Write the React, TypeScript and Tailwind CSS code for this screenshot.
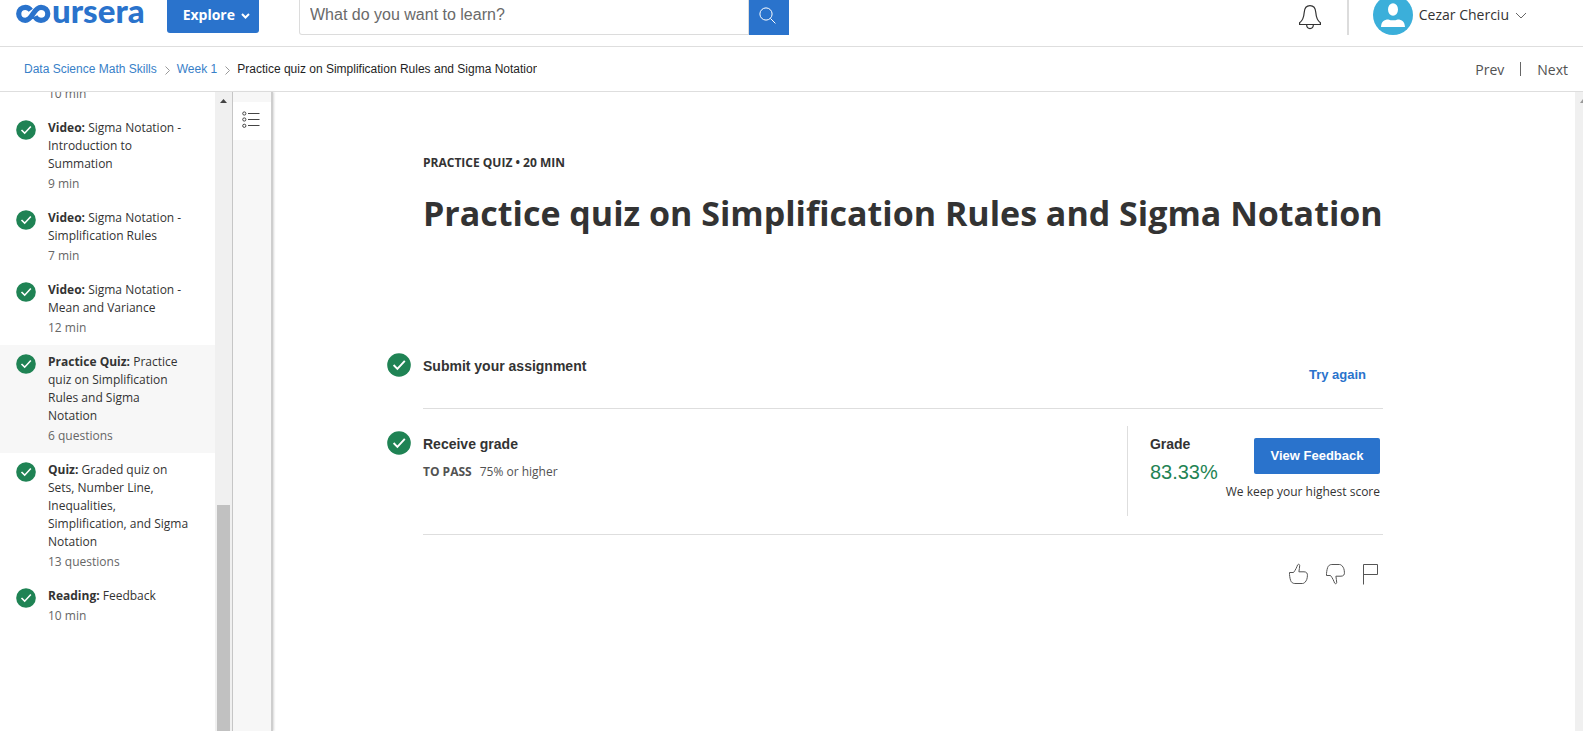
import React from "react";

const ARIAL = "font-['Liberation_Sans',Arial,sans-serif]";

type Item = { kind: string; title: string; meta: string; active?: boolean };

const items: Item[] = [
  { kind: "Video:", title: "Sigma Notation - Introduction to Summation", meta: "9 min" },
  { kind: "Video:", title: "Sigma Notation - Simplification Rules", meta: "7 min" },
  { kind: "Video:", title: "Sigma Notation - Mean and Variance", meta: "12 min" },
  {
    kind: "Practice Quiz:",
    title: "Practice quiz on Simplification Rules and Sigma Notation",
    meta: "6 questions",
    active: true,
  },
  {
    kind: "Quiz:",
    title: "Graded quiz on Sets, Number Line, Inequalities, Simplification, and Sigma Notation",
    meta: "13 questions",
  },
  { kind: "Reading:", title: "Feedback", meta: "10 min" },
];

function Check({ className }: { className: string }) {
  return (
    <svg viewBox="0 0 24 24" className={className} aria-hidden="true">
      <circle cx="12" cy="12" r="11.8" fill="#1f8354" />
      <path d="M6.6 12l3.8 3.8 7.4-8" fill="none" stroke="#fff" strokeWidth="1.9" />
    </svg>
  );
}

function Logo() {
  return (
    <svg width="130" height="32" viewBox="0 0 130 32" role="img" aria-label="coursera" className="block">
      <path
        d="M14.800 10.200C13.400 8.300 11.500 7.300 9.300 7.300C5.600 7.300 2.700 10.200 2.700 13.800C2.700 17.400 5.600 20.300 9.300 20.300C16.600 20.300 17.400 7.300 25 7.300C28.900 7.300 31.800 10.200 31.800 13.800C31.800 17.400 28.900 20.300 25 20.300C22 20.300 20 18.700 19 16.400"
        fill="none"
        stroke="#2a73cc"
        strokeWidth="5.200"
      />
      <text x="36" y="23" fontSize="33" className="font-[Lato,sans-serif] font-black" fill="#2a73cc">
        ursera
      </text>
    </svg>
  );
}

function Header() {
  return (
    <header className="flex h-[47px] items-start border-b border-[#dedede]">
      <a href="#home" className="ml-4 w-[151px] shrink-0">
        <Logo />
      </a>
      <button className="flex h-[33px] w-[92px] shrink-0 items-center justify-end gap-[6px] rounded-b-[3px] bg-[#2a73cc] pr-[9px] pb-1 text-[14px] font-bold text-white">
        Explore
        <svg width="9" height="6" viewBox="0 0 9 6" className="mt-[2px]" aria-hidden="true">
          <path d="M1 1l3.500 3.500L8 1" fill="none" stroke="#fff" strokeWidth="2" />
        </svg>
      </button>
      <form className="ml-10 flex h-[35px] w-[490px]" onSubmit={(e) => e.preventDefault()}>
        <input
          aria-label="Search"
          placeholder="What do you want to learn?"
          className={`min-w-0 flex-1 rounded-bl-[3px] border border-t-0 border-[#dcdcdc] px-[10px] pb-1 text-[16px] text-[#333] outline-none placeholder:text-[#6a6a6a] ${ARIAL}`}
        />
        <button aria-label="Submit search" className="flex w-10 items-center justify-center bg-[#2a73cc] pr-1 pb-[5px]">
          <svg width="17" height="17" viewBox="0 0 17 17" fill="none" stroke="#fff" aria-hidden="true">
            <circle cx="7" cy="7" r="6.100" />
            <path d="M11.400 11.400l5 5" />
          </svg>
        </button>
      </form>
      <div className="ml-auto flex h-[35px] items-start pr-14">
        <button aria-label="Notifications" className="mr-[25px] pt-1">
          <svg width="24" height="26" viewBox="0 0 24 26" fill="none" stroke="#333" strokeWidth="1.200" aria-hidden="true">
            <path d="M1.600 20.500v-1.800C5 16.500 5.800 13.500 6.200 8.500C6.500 4 8.500 1.600 12 1.600s5.500 2.400 5.800 6.900c.4 5 1.200 8 4.600 10.200v1.800z" />
            <path d="M8.600 20.800c.2 2.600 1.500 3.800 3.400 3.800s3.200-1.200 3.400-3.800" />
          </svg>
        </button>
        <span className="mr-6 h-full w-[2px] bg-[#dcdcdc]" />
        <button className="flex h-full items-start text-[14px] text-[#333]">
          <svg width="40" height="35" viewBox="0 5 40 35" className="mr-[6px]" aria-hidden="true">
            <circle cx="20" cy="20" r="20" fill="#3bafda" />
            <ellipse cx="20" cy="14.500" rx="5" ry="6.200" fill="#fff" />
            <path d="M8 32c.3-5.500 3-7.600 7.400-7.600c2.600 1.200 6.600 1.200 9.200 0c4.400 0 7.100 2.100 7.400 7.600z" fill="#fff" />
          </svg>
          <span className="pt-1 leading-[22px]">Cezar Cherciu</span>
          <svg width="12" height="30" viewBox="0 0 12 30" className="ml-[6px]" fill="none" stroke="#666" aria-hidden="true">
            <path d="M1 13l5 5 5-5" />
          </svg>
        </button>
      </div>
    </header>
  );
}

function Crumb() {
  return (
    <svg width="5" height="9" viewBox="0 0 5 9" fill="none" stroke="#999" className="mr-[7px] ml-2 mt-[2px]" aria-hidden="true">
      <path d="M.5 .5l4 4-4 4" />
    </svg>
  );
}

function Breadcrumbs() {
  return (
    <nav className="flex h-[45px] items-center border-b border-[#dedede] pr-[15px] pl-6">
      <div className={`flex items-center text-[12px] ${ARIAL}`}>
        <a href="#course" className="text-[#3880c8]">Data Science Math Skills</a>
        <Crumb />
        <a href="#week" className="text-[#3880c8]">Week 1</a>
        <Crumb />
        <span className="w-[300px] overflow-hidden whitespace-nowrap text-[#1f1f1f]">
          Practice quiz on Simplification Rules and Sigma Notation
        </span>
      </div>
      <div className="ml-auto flex items-center text-[14px] text-[#525252]">
        <a href="#prev">Prev</a>
        <span className="mx-4 h-[14px] w-px bg-[#666]" />
        <a href="#next">Next</a>
      </div>
    </nav>
  );
}

function Sidebar() {
  return (
    <aside className="flex w-[233px] shrink-0 border-r border-[#c4c4c4]">
      <div className="min-w-0 flex-1 overflow-hidden">
        <ul className="-mt-[7px] text-[12px] leading-[18px]">
          <li className="pb-2 pl-12 text-[#666]">10 min</li>
          {items.map((it) => (
            <li key={it.title} className={it.active ? "bg-[#f7f7f7]" : ""}>
              <a href="#item" className="flex py-2 pr-6 pl-4">
                <Check className="mt-[1px] mr-3 size-5 shrink-0" />
                <span className="text-[#333]">
                  <b>{it.kind}</b> {it.title}
                  <span className="mt-[2px] block text-[#666]">{it.meta}</span>
                </span>
              </a>
            </li>
          ))}
        </ul>
      </div>
      <div className="flex w-[17px] flex-col items-center bg-[#f0f0f0]">
        <svg width="7" height="4" viewBox="0 0 7 4" className="mt-[7px]" aria-hidden="true">
          <path d="M3.500 0L7 4H0z" fill="#444" />
        </svg>
        <div className="mt-[402px] w-[13px] flex-1 bg-[#c1c1c1]" />
      </div>
    </aside>
  );
}

function Rail() {
  return (
    <div className="w-10 shrink-0 border-r-2 border-[#cecece] bg-[#f7f7f7] pt-[10px] shadow-[1px_0_2px_#d8d8d8]">
      <button aria-label="Outline" className="flex h-[38px] w-full items-center bg-white pb-[2px] pl-[9px]">
        <svg width="18" height="18" viewBox="0 0 18 18" fill="none" stroke="#444" aria-hidden="true">
          <circle cx="2.300" cy="2.500" r="1.600" />
          <circle cx="2.300" cy="8.500" r="1.600" />
          <circle cx="2.300" cy="14.800" r="1.600" />
          <path d="M6 2.500h11.500M6 8.500h11.500M6 14.500h11.500" />
        </svg>
      </button>
    </div>
  );
}

const thumb =
  "M1.500 9.500H5.500C7.600 7 8.800 4 9.600 1.900C10.200.9 11.600 1.200 11.700 2.400C11.900 4.400 10.900 6.600 10.900 8.800H16C18.500 8.800 19.800 10.500 19.400 12.800C19.300 15.500 18.600 17.600 17.200 19C16.400 20 15.400 20.500 14.400 20.500H6.800C4.800 20.500 3.400 19.400 2.700 17.600C1.800 15 1.400 12 1.500 9.500Z";

function Main() {
  return (
    <main className="min-w-0 flex-1 pt-[62px] pr-48 pl-[150px] text-[#333]">
      <p className="text-[12px] leading-[18px] font-bold">PRACTICE QUIZ • 20 MIN</p>
      <h1 className="mt-4 text-[34px] leading-[50px] font-bold whitespace-nowrap">
        Practice quiz on Simplification Rules and Sigma Notation
      </h1>

      <section className="mt-[115px] flex h-[56px] border-b border-[#dedede]">
        <Check className="-ml-9 mr-3 size-6 shrink-0" />
        <h2 className={`pt-[3px] text-[14px] leading-[20px] font-bold ${ARIAL}`}>Submit your assignment</h2>
        <a href="#retry" className={`mt-3 mr-[17px] ml-auto text-[13px] leading-[20px] font-bold text-[#2a73cc] ${ARIAL}`}>
          Try again
        </a>
      </section>

      <section className="flex h-[126px] border-b border-[#dedede] pt-[17px] pb-[18px]">
        <Check className="mt-[5px] -ml-9 mr-3 size-6 shrink-0" />
        <div className="pt-2">
          <h2 className={`text-[14px] leading-[20px] font-bold ${ARIAL}`}>Receive grade</h2>
          <p className="mt-2 text-[12px] leading-[20px] text-[#525252]">
            <b className="mr-2">TO PASS</b>75% or higher
          </p>
        </div>
        <div className="ml-auto flex border-l border-[#dedede] pr-[3px] pl-[22px]">
          <div className={`pt-2 ${ARIAL}`}>
            <h3 className="text-[14px] leading-[20px] font-bold">Grade</h3>
            <p className="mt-1 text-[20px] leading-[28px] text-[#1f8354]">83.33%</p>
          </div>
          <div className="ml-2 flex flex-col items-end pt-3">
            <button className={`h-9 w-[126px] rounded-[2px] bg-[#2a73cc] text-[13px] font-bold text-white ${ARIAL}`}>
              View Feedback
            </button>
            <p className="mt-2 text-[12px] leading-[20px] whitespace-nowrap">We keep your highest score</p>
          </div>
        </div>
      </section>

      <div className="mt-7 flex justify-end gap-4 pr-1">
        <button aria-label="Like">
          <svg width="21" height="22" viewBox="0 0 21 22" fill="none" stroke="#555" aria-hidden="true">
            <path d={thumb} />
          </svg>
        </button>
        <button aria-label="Dislike">
          <svg width="21" height="22" viewBox="0 0 21 22" fill="none" stroke="#555" aria-hidden="true">
            <path d={thumb} transform="translate(0 22) scale(1 -1)" />
          </svg>
        </button>
        <button aria-label="Report">
          <svg width="17" height="22" viewBox="0 0 17 22" fill="none" stroke="#555" aria-hidden="true">
            <path d="M1.500 21.500V1.500h14v10h-14" />
          </svg>
        </button>
      </div>
    </main>
  );
}

export default function App() {
  return (
    <div className="flex h-screen flex-col overflow-hidden bg-white font-['Open_Sans',sans-serif]">
      <Header />
      <Breadcrumbs />
      <div className="flex min-h-0 flex-1">
        <Sidebar />
        <Rail />
        <Main />
        <div className="flex w-2 shrink-0 justify-end overflow-hidden bg-[#f0f0f0]">
          <svg width="3" height="4" viewBox="0 0 3 4" className="mt-[7px]" aria-hidden="true">
            <path d="M3 0v4H0z" fill="#999" />
          </svg>
        </div>
      </div>
    </div>
  );
}
